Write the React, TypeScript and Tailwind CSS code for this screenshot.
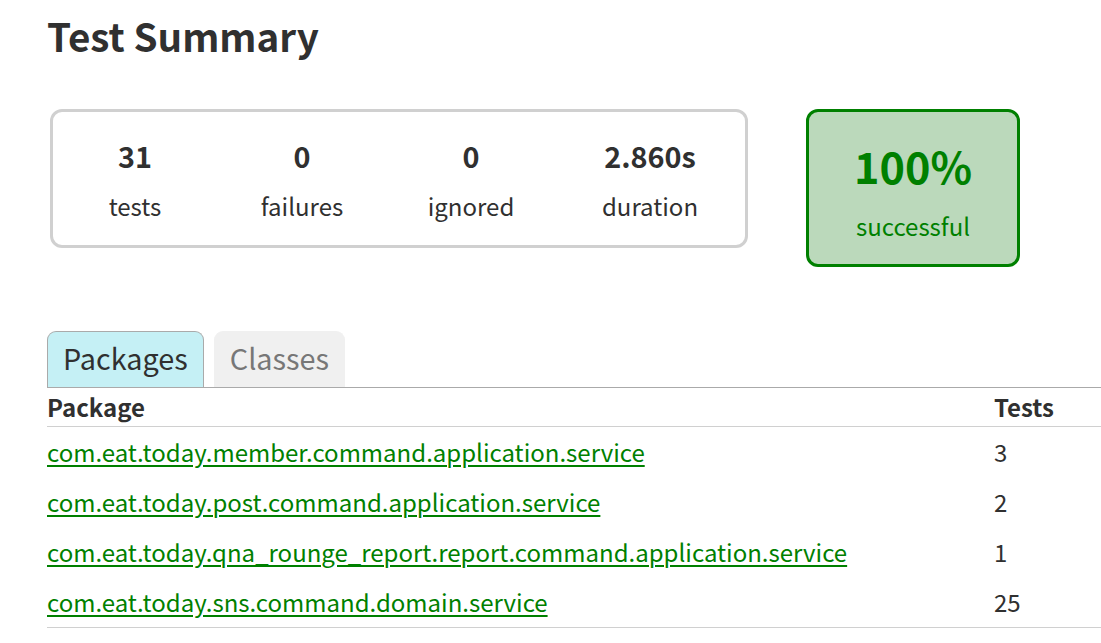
import React from "react";

const font = { fontFamily: '"Noto Sans CJK KR", "Noto Sans", sans-serif' };

const counters = [
  { value: "31", label: "tests" },
  { value: "0", label: "failures" },
  { value: "0", label: "ignored" },
  { value: "2.860s", label: "duration" },
];

const rows = [
  { name: "com.eat.today.member.command.application.service", tests: "3" },
  { name: "com.eat.today.post.command.application.service", tests: "2" },
  { name: "com.eat.today.qna_rounge_report.report.command.application.service", tests: "1" },
  { name: "com.eat.today.sns.command.domain.service", tests: "25" },
];

export default function App() {
  return (
    <div className="min-h-[643px] w-[1101px] overflow-hidden bg-white text-[#303030]" style={font}>
      <div className="pl-[47px]">
        <h1 className="pt-[10px] text-[38.6px] font-bold leading-[50px]">Test Summary</h1>

        <div className="mt-[49px] flex items-start">
          <div className="ml-[3px] grid w-[698px] grid-cols-[164px_170px_168px_1fr] rounded-[12px] border-[3px] border-[#d0d0d0] pt-[25px] pb-[19px] text-center">
            {counters.map((c) => (
              <div key={c.label} className="flex flex-col items-center">
                <div className="text-[28.8px] font-bold leading-[37px]">{c.value}</div>
                <div className="mt-[12px] text-[24px] leading-[40px]">{c.label}</div>
              </div>
            ))}
          </div>
          <div className="ml-[58px] flex w-[214px] flex-col items-center rounded-[12px] border-[3px] border-[#008000] bg-[#bbd9bb] pt-[25px] pb-[18px] text-[#008000]">
            <div className="text-[43.2px] font-bold leading-[56px]">100%</div>
            <div className="mt-[13px] text-[24px] leading-[40px]">successful</div>
          </div>
        </div>

        <div className="mt-[64px] flex items-end gap-[10px] border-b border-[#aaaaaa]">
          <div className="rounded-t-[9px] border border-b-0 border-[#aaaaaa] bg-[#c5f0f5] px-[15px] pb-[4px] text-[28.8px] leading-[51px] text-[#303030]">
            Packages
          </div>
          <div className="rounded-t-[9px] border border-b-0 border-[#f0f0f0] bg-[#f0f0f0] px-[15px] pb-[4px] text-[28.8px] leading-[51px] text-[#777777]">
            Classes
          </div>
        </div>

        <div className="border-b border-[#d0d0d0]">
          <div className="flex h-[39px] border-b border-[#d0d0d0] text-[24px] font-bold leading-[37px]">
            <div className="w-[947px]">Package</div>
            <div>Tests</div>
          </div>
          {rows.map((r) => (
            <div key={r.name} className="flex h-[50px] text-[24px] leading-[49px]">
              <div className="w-[947px]">
                <a href="#" className="text-[#008000] underline decoration-[2px] underline-offset-[3px]">
                  {r.name}
                </a>
              </div>
              <div>{r.tests}</div>
            </div>
          ))}
        </div>
      </div>
    </div>
  );
}
